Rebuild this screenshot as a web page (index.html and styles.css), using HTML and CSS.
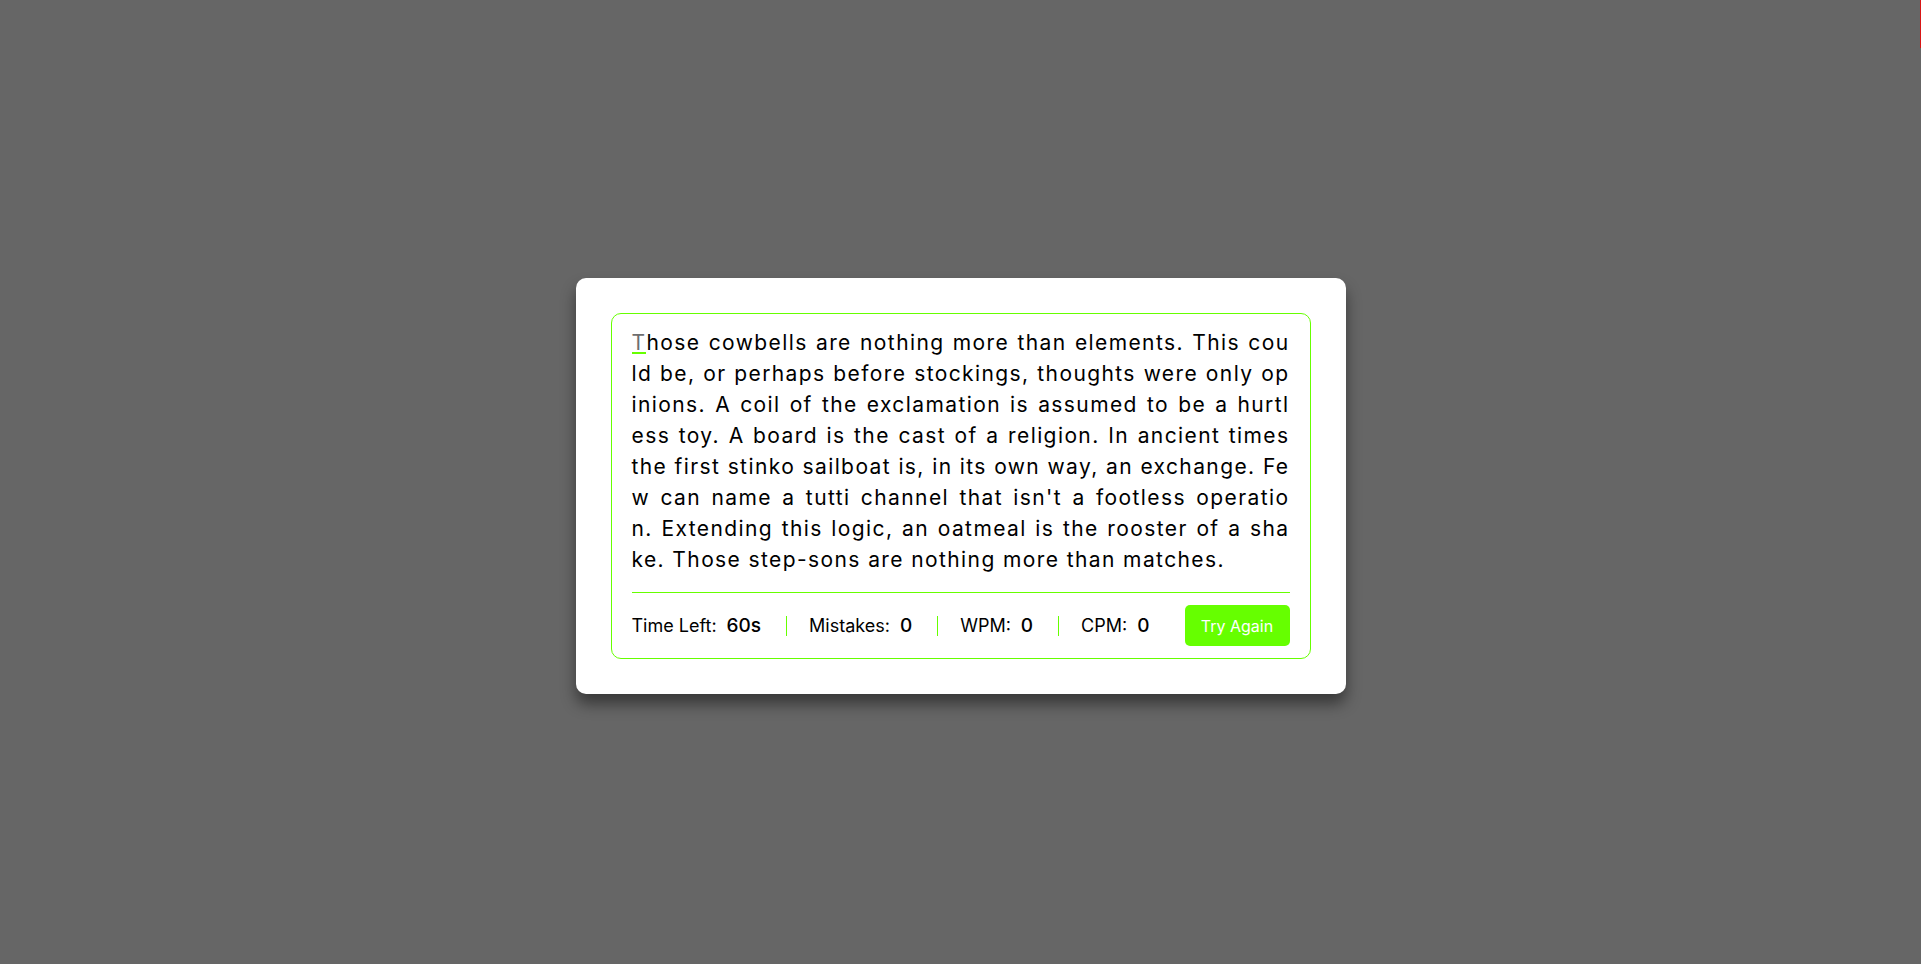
FILE: index.html
```html
<!DOCTYPE html>
<html lang="en">
<head>
<meta charset="utf-8">
<title>Typing Speed Test</title>
<link rel="stylesheet" href="styles.css">
</head>
<body>
<div class="edge-mark"></div>
<main class="page">
  <div class="wrapper">
    <div class="content-box">
      <div class="typing-text">
        <p>
          <span class="line"><span class="active">T</span>hose cowbells are nothing more than elements. This cou</span>
          <span class="line">ld be, or perhaps before stockings, thoughts were only op</span>
          <span class="line">inions. A coil of the exclamation is assumed to be a hurtl</span>
          <span class="line">ess toy. A board is the cast of a religion. In ancient times</span>
          <span class="line">the first stinko sailboat is, in its own way, an exchange. Fe</span>
          <span class="line">w can name a tutti channel that isn't a footless operatio</span>
          <span class="line">n. Extending this logic, an oatmeal is the rooster of a sha</span>
          <span class="line last">ke. Those step-sons are nothing more than matches.</span>
        </p>
      </div>
      <div class="content">
        <ul class="result-details">
          <li class="time"><p>Time Left:</p><span><b>60</b>s</span></li>
          <li class="mistake"><p>Mistakes:</p><span>0</span></li>
          <li class="wpm"><p>WPM:</p><span>0</span></li>
          <li class="cpm"><p>CPM:</p><span>0</span></li>
        </ul>
        <button class="retry">Try Again</button>
      </div>
    </div>
  </div>
</main>
</body>
</html>
```
FILE: styles.css
```css
* {
  margin: 0;
  padding: 0;
  box-sizing: border-box;
}

body {
  background: #666666;
  font-family: "Inter", "Open Sans", "Liberation Sans", sans-serif;
  color: #000;
}

.page {
  min-height: 100vh;
  padding-top: 8px;
  display: flex;
  align-items: center;
  justify-content: center;
}

.edge-mark {
  position: fixed;
  top: 0;
  right: 0;
  width: 1px;
  height: 48px;
  background: #d81616;
}

.wrapper {
  width: 770px;
  padding: 35px;
  background: #fff;
  border-radius: 10px;
  box-shadow: 0 10px 15px rgba(0, 0, 0, 0.45);
}

.content-box {
  padding: 13px 20px 0;
  border-radius: 10px;
  border: 1px solid #66ff00;
}

.typing-text p {
  font-size: 21px;
  line-height: 31px;
  letter-spacing: 1.4px;
  color: #000;
}

.typing-text .line {
  display: block;
  white-space: nowrap;
  text-align: justify;
  text-align-last: justify;
}

.typing-text .line.last {
  text-align-last: left;
}

.typing-text .active {
  position: relative;
  color: #6e6e6e;
}

.typing-text .active::before {
  content: "";
  position: absolute;
  left: 0;
  right: 0;
  bottom: 1px;
  height: 2px;
  background: #66ff00;
}

.content {
  margin-top: 17px;
  padding: 12px 0;
  border-top: 1px solid #66ff00;
  display: flex;
  align-items: center;
  justify-content: space-between;
}

.result-details {
  display: flex;
  align-items: center;
  justify-content: space-between;
  width: calc(100% - 140px);
  list-style: none;
}

.result-details li {
  display: flex;
  align-items: center;
  height: 20px;
}

.result-details li:not(:first-child) {
  padding-left: 22px;
  border-left: 1px solid #66ff00;
}

.result-details li p {
  font-size: 18px;
}

.result-details li span {
  font-size: 19px;
  font-weight: 500;
  margin-left: 10px;
}

.result-details li span b {
  font-weight: 500;
}

.retry {
  width: 105px;
  height: 41px;
  border: none;
  border-radius: 5px;
  background: #66ff00;
  color: #fff;
  font-family: inherit;
  font-size: 16px;
  cursor: pointer;
}
```
